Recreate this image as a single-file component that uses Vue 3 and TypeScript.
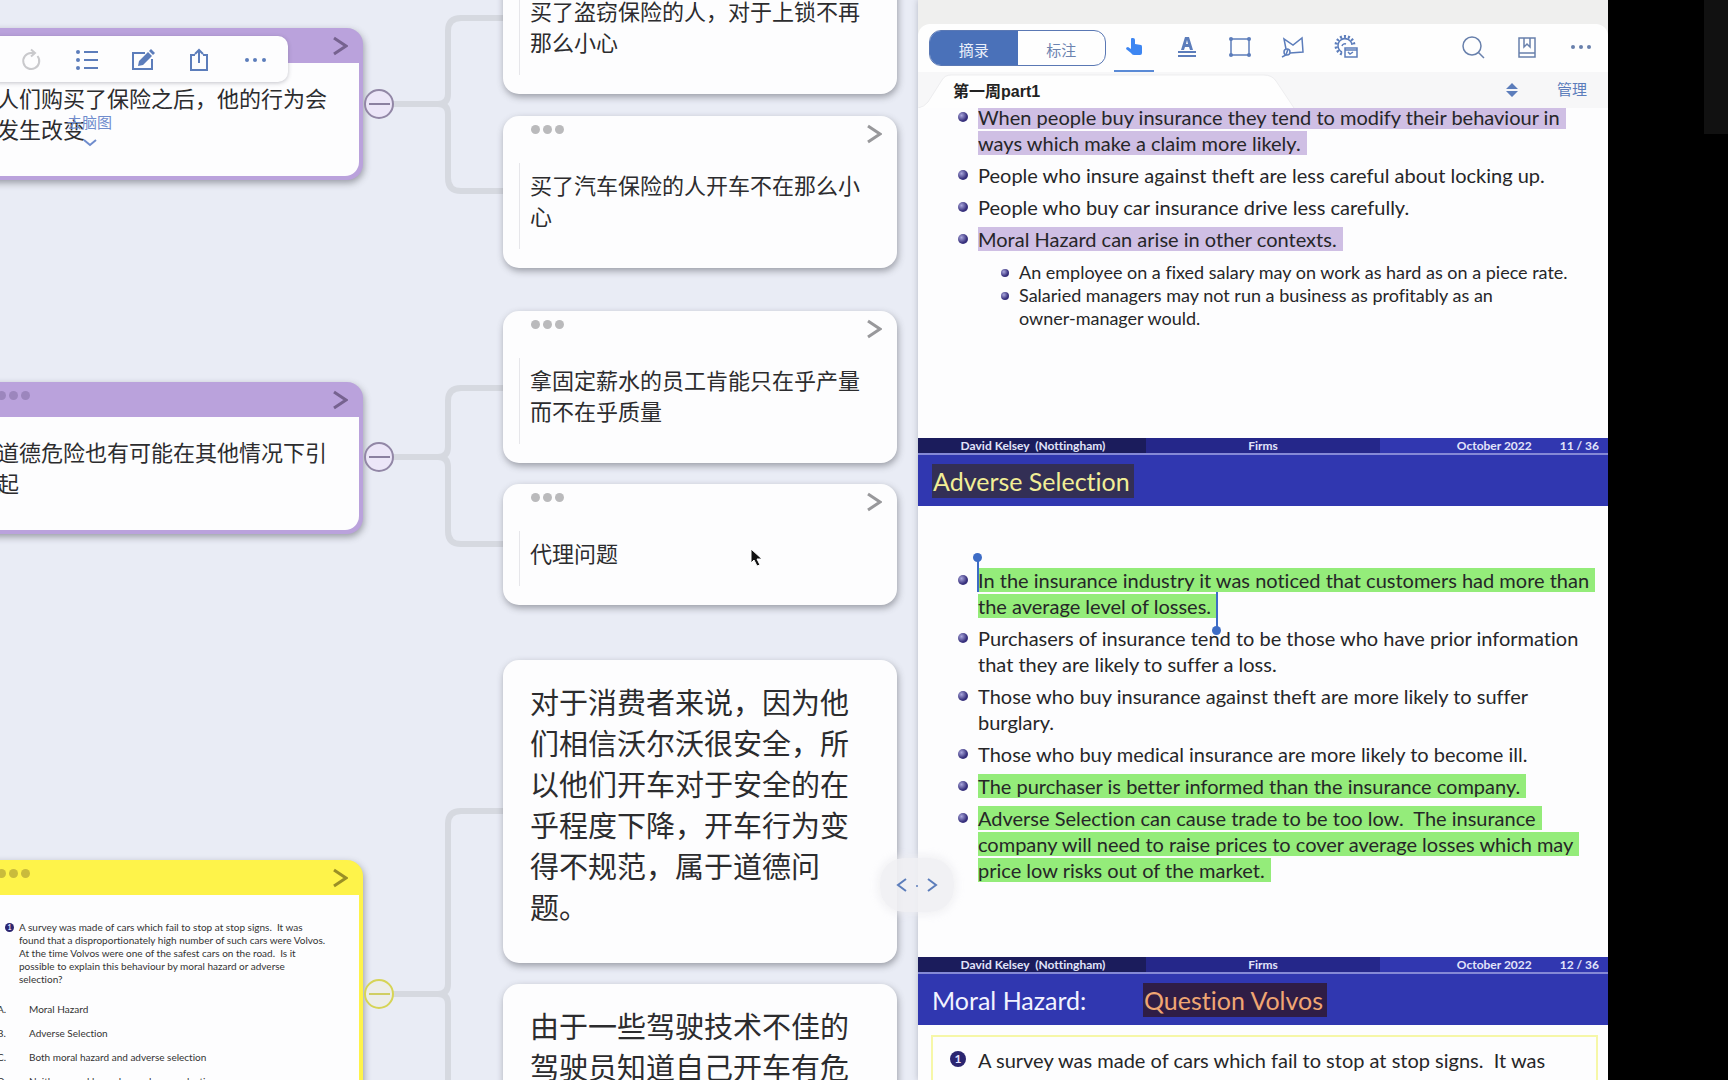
<script setup lang="ts">
interface MapNode {
  id: string
  kind: 'note' | 'large' | 'purple' | 'yellow'
  x: number
  y: number
  lines: string[]
}

interface Line {
  text: string
  mark?: 'violet' | 'green'
  handle?: 'from' | 'to'
}

const nodes: MapNode[] = [
  { id: 'behaviour', kind: 'purple', x: -31, y: 28, lines: ['人们购买了保险之后，他的行为会', '发生改变'] },
  { id: 'contexts', kind: 'purple', x: -31, y: 382, lines: ['道德危险也有可能在其他情况下引', '起'] },
  { id: 'survey', kind: 'yellow', x: -31, y: 860, lines: [] },
  { id: 'theft', kind: 'note', x: 503, y: -58, lines: ['买了盗窃保险的人，对于上锁不再', '那么小心'] },
  { id: 'car', kind: 'note', x: 503, y: 116, lines: ['买了汽车保险的人开车不在那么小', '心'] },
  { id: 'salary', kind: 'note', x: 503, y: 311, lines: ['拿固定薪水的员工肯能只在乎产量', '而不在乎质量'] },
  { id: 'agency', kind: 'note', x: 503, y: 484, lines: ['代理问题'] },
  {
    id: 'volvo',
    kind: 'large',
    x: 503,
    y: 660,
    lines: ['对于消费者来说，因为他', '们相信沃尔沃很安全，所', '以他们开车对于安全的在', '乎程度下降，开车行为变', '得不规范，属于道德问', '题。'],
  },
  { id: 'drivers', kind: 'large', x: 503, y: 984, lines: ['由于一些驾驶技术不佳的', '驾驶员知道自己开车有危', '险'] },
]

const joints = [
  { id: 'j1', y: 104, tone: 'purple' },
  { id: 'j2', y: 457, tone: 'purple' },
  { id: 'j3', y: 994, tone: 'yellow' },
]

const surveyLines = [
  'A survey was made of cars which fail to stop at stop signs.  It was',
  'found that a disproportionately high number of such cars were Volvos.',
  'At the time Volvos were one of the safest cars on the road.  Is it',
  'possible to explain this behaviour by moral hazard or adverse',
  'selection?',
]

const answers = [
  { key: 'A.', text: 'Moral Hazard' },
  { key: 'B.', text: 'Adverse Selection' },
  { key: 'C.', text: 'Both moral hazard and adverse selection' },
  { key: 'D.', text: 'Neither moral hazard nor adverse selection' },
]

const hazardItems: Line[][] = [
  [
    { text: 'When people buy insurance they tend to modify their behaviour in', mark: 'violet' },
    { text: 'ways which make a claim more likely.', mark: 'violet' },
  ],
  [{ text: 'People who insure against theft are less careful about locking up.' }],
  [{ text: 'People who buy car insurance drive less carefully.' }],
  [{ text: 'Moral Hazard can arise in other contexts.', mark: 'violet' }],
]

const hazardSub: string[][] = [
  ['An employee on a fixed salary may on work as hard as on a piece rate.'],
  ['Salaried managers may not run a business as profitably as an', 'owner-manager would.'],
]

const selectionItems: Line[][] = [
  [
    { text: 'In the insurance industry it was noticed that customers had more than', mark: 'green', handle: 'from' },
    { text: 'the average level of losses.', mark: 'green', handle: 'to' },
  ],
  [
    { text: 'Purchasers of insurance tend to be those who have prior information' },
    { text: 'that they are likely to suffer a loss.' },
  ],
  [{ text: 'Those who buy insurance against theft are more likely to suffer' }, { text: 'burglary.' }],
  [{ text: 'Those who buy medical insurance are more likely to become ill.' }],
  [{ text: 'The purchaser is better informed than the insurance company.', mark: 'green' }],
  [
    { text: 'Adverse Selection can cause trade to be too low.  The insurance', mark: 'green' },
    { text: 'company will need to raise prices to cover average losses which may', mark: 'green' },
    { text: 'price low risks out of the market.', mark: 'green' },
  ],
]
</script>

<template>
  <div class="app">
    <main class="canvas">
      <svg class="links" width="520" height="1400" aria-hidden="true">
        <path d="M392 104H438Q448 104 448 94V31Q448 18 461 18H506M438 104Q448 104 448 114V178Q448 191 461 191H506" />
        <path d="M392 457H438Q448 457 448 447V401Q448 388 461 388H506M438 457Q448 457 448 467V531Q448 544 461 544H506" />
        <path d="M392 994H438Q448 994 448 984V824Q448 811 461 811H506M438 994Q448 994 448 1004V1400" />
      </svg>

      <article
        v-for="node in nodes"
        :key="node.id"
        class="node"
        :class="node.kind"
        :style="{ left: node.x + 'px', top: node.y + 'px' }"
      >
        <header v-if="node.kind !== 'large'" class="node-head">
          <button class="grip" aria-label="更多"><i></i><i></i><i></i></button>
          <button class="open" aria-label="打开">
            <svg width="16" height="20" viewBox="0 0 16 20"><path d="M2 2L14 10L2 18" /></svg>
          </button>
        </header>
        <div v-if="node.kind === 'yellow'" class="survey">
          <div class="question">
            <b class="num">1</b>
            <p><span v-for="line in surveyLines" :key="line" class="line">{{ line }}</span></p>
          </div>
          <dl>
            <div v-for="a in answers" :key="a.key" class="answer">
              <dt>{{ a.key }}</dt>
              <dd>{{ a.text }}</dd>
            </div>
          </dl>
        </div>
        <p v-else class="node-text">
          <span v-for="line in node.lines" :key="line" class="line">{{ line }}</span>
        </p>
      </article>

      <button
        v-for="j in joints"
        :key="j.id"
        class="joint"
        :class="j.tone"
        :style="{ top: j.y - 15 + 'px' }"
        aria-label="折叠"
      ></button>

      <nav class="float-bar" aria-label="脑图工具">
        <button class="faded" aria-label="重做">
          <svg width="24" height="24" viewBox="0 0 24 24"><path d="M18.500 8A8 8 0 1 1 12 5H15" /><path d="M12 1.500L16 5L12 8.500" /></svg>
        </button>
        <button aria-label="大纲">
          <svg width="24" height="24" viewBox="0 0 24 24"><path d="M9 4H23M9 12H23M9 20H23" /><g class="solid"><circle cx="3" cy="4" r="2" /><circle cx="3" cy="12" r="2" /><circle cx="3" cy="20" r="2" /></g></svg>
        </button>
        <button aria-label="编辑">
          <svg width="24" height="24" viewBox="0 0 24 24"><path d="M14 5H2V21H21V11" /><path class="solid" d="M8 13L17 4L21 8L12 17L7 18ZM18 3L20 1L24 5L22 7Z" /></svg>
        </button>
        <button aria-label="分享">
          <svg width="24" height="24" viewBox="0 0 24 24"><path d="M8 7H4V22H20V7H16M12 15V3" /><path d="M8 6L12 2L16 6" /></svg>
        </button>
        <button aria-label="更多">
          <svg width="24" height="24" viewBox="0 0 24 24"><g class="solid"><circle cx="4" cy="12" r="2" /><circle cx="12" cy="12" r="2" /><circle cx="21" cy="12" r="2" /></g></svg>
        </button>
      </nav>

      <button class="to-map">
        <span>去脑图</span>
        <svg width="16" height="9" viewBox="0 0 16 9"><path d="M2 2L8 7L14 2" /></svg>
      </button>

      <svg class="cursor" width="14" height="20" viewBox="0 0 14 20" aria-hidden="true">
        <path d="M1 1V15L4 12L7 18L10 17L7 11H12Z" />
      </svg>
    </main>

    <section class="reader">
      <div class="tools">
        <div class="segment">
          <button class="active">摘录</button>
          <button>标注</button>
        </div>
        <div class="tool-set">
          <button class="picked" aria-label="手形">
            <svg width="24" height="24" viewBox="0 0 24 24"><path class="solid" d="M9 4Q9 3 10 3H11Q13 3 13 5V9L19 10Q20 10 20 12V18Q20 20 18 20H12Q10 20 9 18L4 14Q4 12 6 12L9 14Z" /></svg>
          </button>
          <button aria-label="文字高亮">
            <svg width="24" height="24" viewBox="0 0 24 24"><path class="solid" fill-rule="evenodd" d="M6 15L10 2H14L18 15H15L14 12H10L9 15ZM11 9H13L12 5Z" /><path d="M3 17H21M3 21H21" /></svg>
          </button>
          <button aria-label="框选">
            <svg class="thin" width="24" height="24" viewBox="0 0 24 24"><path d="M3 4H21V20H3Z" /><g class="solid"><circle cx="3" cy="4" r="2" /><circle cx="21" cy="4" r="2" /><circle cx="3" cy="20" r="2" /><circle cx="21" cy="20" r="2" /></g></svg>
          </button>
          <button aria-label="套索">
            <svg class="thin" width="24" height="24" viewBox="0 0 24 24"><path d="M5 14L3 4L12 10L21 3L22 17L9 18" /><circle cx="6" cy="17" r="3" /><path d="M7 14L5 20L1 22" /></svg>
          </button>
          <button aria-label="设置">
            <svg class="thin" width="24" height="24" viewBox="0 0 24 24"><path d="M8 17A7 7 0 1 1 18 10M8 11A3 3 0 0 1 12 9" /><path class="teeth" d="M8 19A9 9 0 1 1 20 10" /><path d="M11 13H23V22H11ZM11 15H23M14 17L16 19L19 17" /></svg>
          </button>
        </div>
        <div class="tool-set right">
          <button aria-label="搜索">
            <svg class="thin" width="24" height="24" viewBox="0 0 24 24"><circle cx="11" cy="11" r="9" /><path d="M17 17L23 23" /></svg>
          </button>
          <button aria-label="书签">
            <svg class="thin" width="24" height="24" viewBox="0 0 24 24"><path d="M4 3H20V22H4ZM4 18H20M9 3V12L12 9L15 12V3" /></svg>
          </button>
          <button aria-label="更多">
            <svg width="24" height="24" viewBox="0 0 24 24"><g class="solid"><circle cx="4" cy="12" r="2" /><circle cx="12" cy="12" r="2" /><circle cx="20" cy="12" r="2" /></g></svg>
          </button>
        </div>
      </div>

      <div class="tabs">
        <svg class="tab-shape" width="384" height="34" viewBox="0 0 384 34" aria-hidden="true"><path d="M0 34Q6 33 10 28L24 6Q27 1 33 1H346Q354 1 358 7L376 34" /></svg>
        <button class="tab">第一周part1</button>
        <button class="sort" aria-label="切换">
          <svg width="12" height="16" viewBox="0 0 12 16"><path class="solid" d="M6 1L12 7H0ZM6 15L12 9H0Z" /></svg>
        </button>
        <button class="manage">管理</button>
      </div>

      <div class="pages">
        <section class="slide">
          <ul class="points first">
            <li v-for="(item, i) in hazardItems" :key="i">
              <span v-for="line in item" :key="line.text" class="line">
                <mark v-if="line.mark" :class="line.mark">{{ line.text }}</mark>
                <template v-else>{{ line.text }}</template>
              </span>
            </li>
          </ul>
          <ul class="points sub">
            <li v-for="(item, i) in hazardSub" :key="i">
              <span v-for="line in item" :key="line" class="line">{{ line }}</span>
            </li>
          </ul>
          <footer class="strip">
            <span>David Kelsey&nbsp; (Nottingham)</span>
            <span>Firms</span>
            <span class="date"><span>October 2022</span><span>11 / 36</span></span>
          </footer>
        </section>

        <section class="slide">
          <h2><mark class="lemon">Adverse Selection</mark></h2>
          <ul class="points second">
            <li v-for="(item, i) in selectionItems" :key="i">
              <span v-for="line in item" :key="line.text" class="line">
                <mark v-if="line.mark" :class="[line.mark, line.handle]">{{ line.text }}</mark>
                <template v-else>{{ line.text }}</template>
              </span>
            </li>
          </ul>
          <footer class="strip">
            <span>David Kelsey&nbsp; (Nottingham)</span>
            <span>Firms</span>
            <span class="date"><span>October 2022</span><span>12 / 36</span></span>
          </footer>
        </section>

        <section class="slide">
          <h2><span class="lead">Moral Hazard:</span><mark class="amber">Question Volvos</mark></h2>
          <div class="boxed">
            <b class="num">1</b>
            <p><span v-for="line in surveyLines" :key="line" class="line">{{ line }}</span></p>
          </div>
        </section>
      </div>

      <button class="splitter" aria-label="调整宽度">
        <svg width="44" height="20" viewBox="0 0 44 20"><path d="M11 4L3 10L11 16M33 4L41 10L33 16" /><circle class="solid" cx="22" cy="11" r="1" /></svg>
      </button>
    </section>

    <aside class="edge"><div class="edge-tile"></div></aside>
  </div>
</template>

<style>
body {
  margin: 0;
  overflow: hidden;
  background: #000;
}
</style>

<style scoped>
.app {
  display: grid;
  grid-template-columns: 153fr 115fr 20fr;
  height: 100vh;
  overflow: hidden;
  background: #000;
  font-family: "Liberation Sans", "Noto Sans CJK SC", sans-serif;
  color: #2c2c2e;
}

button {
  padding: 0;
  border: 0;
  background: none;
  color: #5c7dbb;
  font: inherit;
}

svg {
  display: block;
  fill: none;
  stroke: currentColor;
  stroke-width: 2;
}

.thin {
  stroke-width: 1.5;
}

.solid {
  fill: currentColor;
  stroke: none;
}

p,
ul,
dl,
dd,
h2 {
  margin: 0;
  padding: 0;
}

.line {
  display: block;
  white-space: pre;
}

/* mind map */
.canvas {
  position: relative;
  overflow: hidden;
  background: #e9ecf5;
}

.links {
  position: absolute;
  left: 0;
  top: 0;
  color: #d6d9e0;
  stroke-width: 6;
}

.node {
  position: absolute;
  box-sizing: border-box;
  width: 394px;
  border-radius: 16px;
  background: #fdfdfe;
  box-shadow: 1px 3px 7px rgba(60, 62, 70, 0.45);
}

.note {
  padding-bottom: 19px;
}

.node-head {
  display: flex;
  justify-content: space-between;
  height: 47px;
  padding: 0 15px 0 28px;
}

.grip {
  display: flex;
  gap: 3px;
  height: 9px;
  margin-top: 9px;
}

.grip i {
  width: 9px;
  height: 9px;
  border-radius: 50%;
  background: #bababc;
}

.open {
  height: 20px;
  margin-top: 8px;
  color: #98989b;
}

.open svg {
  stroke-width: 3;
}

.node-text {
  font-size: 22px;
  line-height: 31px;
}

.note .node-text {
  margin-left: 16px;
  padding: 8px 0 16px 10px;
  border-left: 1px solid #e6e6ea;
}

.large .node-text {
  padding: 24px 0 33px 27px;
  font-size: 29px;
  line-height: 41px;
}

.purple .node-head,
.yellow .node-head {
  height: 35px;
}

.node.purple {
  padding: 0 4px 4px;
  background: #baa2dc;
}

.node.purple .node-head {
  padding: 0 11px 0 24px;
}

.purple .grip i {
  background: #9c86bd;
}

.purple .open {
  color: #76628f;
}

.purple .node-text {
  padding: 21px 0 30px 24px;
  border-radius: 0 0 14px 14px;
  background: #fdfdfe;
}

.node.yellow {
  padding: 0 4px 4px;
  background: #fef34a;
}

.node.yellow .node-head {
  padding: 0 11px 0 24px;
}

.yellow .grip i {
  background: #c9bb3c;
}

.yellow .open {
  color: #9a8f26;
}

.survey {
  padding: 26px 0 30px 24px;
  background: #fdfdfe;
  color: #333;
  font: 10px/13px Lato, sans-serif;
  font-variant-ligatures: none;
}

.question {
  display: flex;
  gap: 5px;
  padding-left: 8px;
}

.num {
  flex: none;
  box-sizing: border-box;
  width: 9px;
  height: 9px;
  margin-top: 2px;
  border-radius: 50%;
  background: #2b2570;
  color: #e4e2ff;
  font: bold 7px/9px Lato, sans-serif;
  text-align: center;
}

.survey dl {
  padding-top: 11px;
}

.answer {
  display: flex;
  line-height: 24px;
}

.answer dt {
  width: 32px;
}

.joint {
  position: absolute;
  left: 364px;
  box-sizing: border-box;
  width: 30px;
  height: 30px;
  border: 2px solid #9287a6;
  border-radius: 50%;
  background: linear-gradient(currentColor, currentColor) center / 21px 2px no-repeat #ece6f8;
  color: #8b80a0;
}

.joint.yellow {
  border-color: #d6d456;
  background-color: #ecedea;
  color: #d0ce62;
}

.float-bar {
  position: absolute;
  left: -12px;
  top: 36px;
  display: flex;
  gap: 32px;
  box-sizing: border-box;
  width: 300px;
  height: 46px;
  padding: 12px 20px 10px 31px;
  border-radius: 10px;
  background: #fdfdfe;
  box-shadow: 0 1px 4px rgba(60, 60, 80, 0.3);
}

.float-bar .faded {
  color: #c9c9cc;
}

.to-map {
  position: absolute;
  left: 67px;
  top: 113px;
  display: grid;
  justify-items: center;
  gap: 5px;
  font-size: 15px;
  line-height: 20px;
  color: #6f8ccd;
}

.cursor {
  position: absolute;
  left: 750px;
  top: 548px;
}

.cursor path {
  fill: #111;
  stroke: #fff;
  stroke-width: 1;
}

/* document reader */
.reader {
  position: relative;
  display: flex;
  flex-direction: column;
  min-width: 0;
  height: 100vh;
  box-sizing: border-box;
  padding-top: 24px;
  background: #efefee;
  box-shadow: 0 0 6px rgba(60, 62, 80, 0.3);
}

.tools {
  display: flex;
  align-items: center;
  flex: none;
  box-sizing: border-box;
  height: 48px;
  padding: 0 15px 0 11px;
  border-radius: 12px 12px 0 0;
  background: #fefefe;
}

.segment {
  display: flex;
  box-sizing: border-box;
  width: 177px;
  height: 36px;
  overflow: hidden;
  border: 1px solid #5a78b4;
  border-radius: 12px;
}

.segment button {
  flex: 1;
  padding-top: 3px;
  font-size: 15px;
  color: #6c83b0;
}

.segment .active {
  background: #4a71b9;
  color: #e9effa;
}

.tool-set {
  display: flex;
  align-self: stretch;
  gap: 13px;
  margin-left: 8px;
}

.tool-set button {
  display: grid;
  place-items: center;
  width: 40px;
  border-bottom: 2px solid transparent;
}

.tool-set .picked {
  border-color: #5a8ad6;
  color: #3d86f2;
}

.tool-set.right {
  gap: 30px;
  margin-left: auto;
}

.tool-set.right button {
  width: 24px;
  color: #6880ac;
}

.teeth {
  stroke-width: 3;
  stroke-dasharray: 2 2;
}

.tabs {
  position: relative;
  display: flex;
  align-items: center;
  flex: none;
  box-sizing: border-box;
  height: 36px;
  padding: 0 21px 0 35px;
  background: #f7f7f8;
}

.tab-shape {
  position: absolute;
  left: 0;
  bottom: 0;
  fill: #fefefe;
  stroke: #ededef;
  stroke-width: 1;
}

.tab {
  position: relative;
  margin-right: auto;
  font-size: 16px;
  font-weight: bold;
  color: #222;
}

.sort {
  margin-right: 39px;
}

.manage {
  padding-bottom: 4px;
  font-size: 15px;
}

.pages {
  flex: 1;
  min-height: 0;
  overflow: hidden;
  background: #fdfdfe;
  font-family: Lato, sans-serif;
  font-variant-ligatures: none;
  color: #262628;
}

.points {
  display: grid;
  gap: 6px;
  list-style: none;
  font-size: 20px;
  line-height: 26px;
}

.points.first {
  margin-top: -4px;
}

.points li {
  position: relative;
  padding-left: 60px;
}

.points li::before {
  content: "";
  position: absolute;
  left: 40px;
  top: 8px;
  width: 10px;
  height: 10px;
  border-radius: 50%;
  background: radial-gradient(circle at 35% 35%, #a9a6dc, #37307c 60%);
}

.points.sub {
  gap: 0;
  padding: 9px 0 108px;
  font-size: 18px;
  line-height: 23px;
}

.points.sub li {
  padding-left: 101px;
}

.points.sub li::before {
  left: 83px;
  width: 8px;
  height: 8px;
}

.points.second {
  padding: 61px 0 74px;
}

mark {
  position: relative;
  padding-right: 6px;
  color: inherit;
}

.violet {
  background: #cfbfe4;
}

.green {
  background: #94ec7a;
}

.from::before,
.to::before,
.from::after,
.to::after {
  content: "";
  position: absolute;
  background: #3d6cc6;
}

.from::before {
  left: -1px;
  top: -8px;
  width: 2px;
  height: 32px;
}

.from::after {
  left: -5px;
  top: -15px;
  width: 9px;
  height: 9px;
  border-radius: 50%;
}

.to::before {
  right: -1px;
  top: -2px;
  width: 2px;
  height: 36px;
}

.to::after {
  right: -4px;
  top: 32px;
  width: 9px;
  height: 9px;
  border-radius: 50%;
}

.strip {
  display: grid;
  grid-template-columns: repeat(3, 1fr);
  height: 15px;
  border-bottom: 2px solid #8589d6;
  background: linear-gradient(90deg, #1b1c5c 33%, #25278a 33% 67%, #3137b0 67%);
  color: #e2e4fa;
  font-size: 12px;
  font-weight: bold;
  line-height: 15px;
  text-align: center;
}

.date {
  display: flex;
  justify-content: flex-end;
  gap: 28px;
  padding-right: 9px;
}

h2 {
  display: flex;
  align-items: center;
  height: 51px;
  padding-left: 14px;
  background: #3037b0;
  color: #f2f3ff;
  font-size: 25px;
  font-weight: normal;
  line-height: 34px;
}

h2 mark {
  padding: 0 4px 0 1px;
}

.lead {
  width: 211px;
}

.lemon {
  background: #332f55;
  color: #f2ee96;
}

.amber {
  background: #2f1d45;
  color: #f0a673;
}

.boxed {
  display: flex;
  gap: 12px;
  margin: 10px 10px 0 13px;
  padding: 10px 0 20px 17px;
  border: 2px solid #f6f7a8;
  font-size: 20px;
  line-height: 26px;
}

.boxed .num {
  width: 16px;
  height: 16px;
  margin-top: 4px;
  font-size: 12px;
  line-height: 16px;
}

.splitter {
  position: absolute;
  left: -38px;
  top: 858px;
  display: grid;
  place-items: center;
  width: 74px;
  height: 54px;
  border-radius: 24px;
  background: rgba(240, 240, 243, 0.9);
  box-shadow: 0 0 8px 2px rgba(236, 236, 240, 0.8);
}

/* window edge */
.edge {
  display: flex;
  justify-content: flex-end;
  position: relative;
  background: #000;
}

.edge-tile {
  width: 24px;
  height: 134px;
  background: #111;
}
</style>
